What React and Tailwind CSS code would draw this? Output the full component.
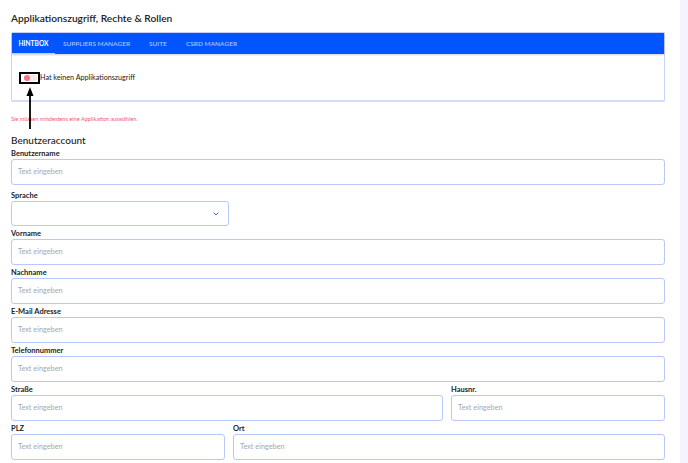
import React from "react";
import { ChevronDown } from "lucide-react";

const Field = ({ label, className = "", children }) => (
    <div className={className}>
        <div className="h-[11px] leading-[11px] text-[7.5px] font-bold text-[#222]">{label}</div>
        {children}
    </div>
);

const Input = () => (
    <div className="h-[26px] rounded-[3px] border border-[#b8c7fc] bg-white flex items-center px-[6px]">
        <span className="text-[7.3px] text-[#a8a8a8]">Text eingeben</span>
    </div>
);

const App = () => {
    const tabs = ["Suppliers Manager", "Suite", "CSRD Manager"];

    return (
        <div
            className="w-[688px] h-[463px] flex bg-white overflow-hidden"
            style={{ fontFamily: "Lato, 'Noto Sans', sans-serif" }}
        >
            <div className="w-[680px] pl-[11px] pr-[15px]">
                {/* Heading */}
                <h1 className="pt-[10px] leading-[16px] text-[10.2px] font-semibold text-[#222]">
                    Applikationszugriff, Rechte &amp; Rollen
                </h1>

                {/* App access card */}
                <div className="mt-[6px] rounded-[2px] border border-[#c6d3fc] border-b-2 border-b-[#d3dcfc]">
                    <div className="h-[21px] bg-[#0055ff] flex items-stretch shadow-[0_1px_2px_rgba(0,0,0,0.2)]">
                        <div className="relative w-[43px] flex items-center justify-center text-[6.6px] font-bold text-white uppercase">
                            Hintbox
                            <div className="absolute left-0 right-0 bottom-0 h-[1px] bg-[#9fe3c4]"></div>
                        </div>
                        <div className="flex items-center pl-[8px] text-[6.5px] font-semibold uppercase text-[#a9c4ff]">
                            <span className="w-[86px]">{tabs[0]}</span>
                            <span className="w-[37px]">{tabs[1]}</span>
                            <span>{tabs[2]}</span>
                        </div>
                    </div>
                    <div className="h-[46px] flex items-center pl-[7px] pt-[2px]">
                        <div className="relative w-[21px] h-[12px] border-2 border-black bg-white flex items-center pl-[3px]">
                            <div className="w-[13px] h-[6px] rounded-full bg-[#ffe4e6] flex items-center">
                                <div className="w-[6px] h-[6px] rounded-full bg-[#f47486]"></div>
                            </div>
                            {/* annotation arrow */}
                            <svg
                                className="absolute left-[3px] top-[12px]"
                                width="12"
                                height="44"
                                viewBox="0 0 12 44"
                            >
                                <polygon points="6,1 2.5,10 9.5,10" fill="#000" />
                                <line x1="6" y1="9" x2="6" y2="43" stroke="#000" strokeWidth="1.8" />
                            </svg>
                        </div>
                        <span className="text-[7.2px] text-[#222]">Hat keinen Applikationszugriff</span>
                    </div>
                </div>

                <div className="mt-[13px] leading-[8px] text-[5.6px] text-[#f25a6e]">
                    Sie müssen mindestens eine Applikation auswählen.
                </div>

                <h2 className="mt-[10px] leading-[14px] text-[10px] font-medium text-[#222]">Benutzeraccount</h2>

                <div className="mt-[1px] flex flex-col gap-[2px]">
                    <Field label="Benutzername">
                        <Input />
                    </Field>
                    <Field label="Sprache" className="mt-[3px] w-[218px]">
                        <div className="h-[25px] rounded-[3px] border border-[#b8c7fc] bg-white flex items-center justify-end pr-[8px]">
                            <ChevronDown size={8} strokeWidth={3} className="text-[#3b6cf6]" />
                        </div>
                    </Field>
                    <Field label="Vorname">
                        <Input />
                    </Field>
                    <Field label="Nachname">
                        <Input />
                    </Field>
                    <Field label="E-Mail Adresse">
                        <Input />
                    </Field>
                    <Field label="Telefonnummer">
                        <Input />
                    </Field>
                    <div className="grid grid-cols-[1fr_214px] gap-x-[8px]">
                        <Field label="Straße">
                            <Input />
                        </Field>
                        <Field label="Hausnr.">
                            <Input />
                        </Field>
                    </div>
                    <div className="grid grid-cols-[214px_1fr] gap-x-[8px]">
                        <Field label="PLZ">
                            <Input />
                        </Field>
                        <Field label="Ort">
                            <Input />
                        </Field>
                    </div>
                </div>
            </div>
            <div className="flex-1 bg-[#f4f5fc]"></div>
        </div>
    );
};

export default App;
